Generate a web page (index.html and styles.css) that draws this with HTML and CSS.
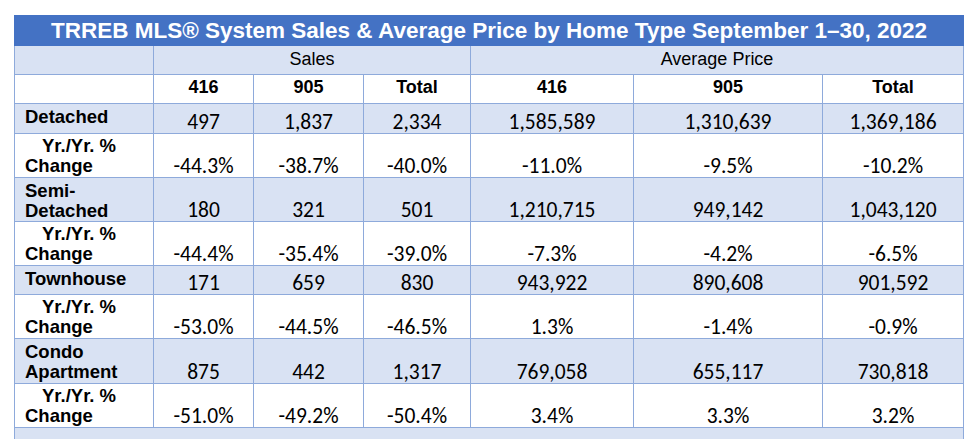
FILE: index.html
```html
<!DOCTYPE html>
<html lang="en">
<head>
<meta charset="utf-8">
<title>TRREB MLS® System Sales &amp; Average Price by Home Type</title>
<link rel="stylesheet" href="styles.css">
</head>
<body>
<table class="sales-table">
  <colgroup>
    <col class="c-label">
    <col class="c-s416">
    <col class="c-s905">
    <col class="c-stot">
    <col class="c-p416">
    <col class="c-p905">
    <col class="c-ptot">
  </colgroup>
  <tr class="title-row">
    <th colspan="7" class="title">TRREB MLS® System Sales &amp; Average Price by Home Type September 1–30, 2022</th>
  </tr>
  <tr class="group-row shaded">
    <th class="blank"></th>
    <th colspan="3" class="group">Sales</th>
    <th colspan="3" class="group">Average Price</th>
  </tr>
  <tr class="head-row">
    <th class="blank"></th>
    <th class="col-head">416</th>
    <th class="col-head">905</th>
    <th class="col-head">Total</th>
    <th class="col-head">416</th>
    <th class="col-head">905</th>
    <th class="col-head">Total</th>
  </tr>
  <tr class="type-row shaded">
    <th class="label">Detached</th>
    <td>497</td><td>1,837</td><td>2,334</td><td>1,585,589</td><td>1,310,639</td><td>1,369,186</td>
  </tr>
  <tr class="change-row">
    <th class="label change">Yr./Yr. %<br>Change</th>
    <td>-44.3%</td><td>-38.7%</td><td>-40.0%</td><td>-11.0%</td><td>-9.5%</td><td>-10.2%</td>
  </tr>
  <tr class="type-row two-line shaded">
    <th class="label">Semi-<br>Detached</th>
    <td>180</td><td>321</td><td>501</td><td>1,210,715</td><td>949,142</td><td>1,043,120</td>
  </tr>
  <tr class="change-row">
    <th class="label change">Yr./Yr. %<br>Change</th>
    <td>-44.4%</td><td>-35.4%</td><td>-39.0%</td><td>-7.3%</td><td>-4.2%</td><td>-6.5%</td>
  </tr>
  <tr class="type-row short shaded">
    <th class="label">Townhouse</th>
    <td>171</td><td>659</td><td>830</td><td>943,922</td><td>890,608</td><td>901,592</td>
  </tr>
  <tr class="change-row">
    <th class="label change">Yr./Yr. %<br>Change</th>
    <td>-53.0%</td><td>-44.5%</td><td>-46.5%</td><td>1.3%</td><td>-1.4%</td><td>-0.9%</td>
  </tr>
  <tr class="type-row two-line tall shaded">
    <th class="label">Condo<br>Apartment</th>
    <td>875</td><td>442</td><td>1,317</td><td>769,058</td><td>655,117</td><td>730,818</td>
  </tr>
  <tr class="change-row">
    <th class="label change">Yr./Yr. %<br>Change</th>
    <td>-51.0%</td><td>-49.2%</td><td>-50.4%</td><td>3.4%</td><td>3.3%</td><td>3.2%</td>
  </tr>
  <tr class="foot-row shaded">
    <td colspan="7"></td>
  </tr>
</table>
</body>
</html>
```

FILE: styles.css
```css
html, body {
  margin: 0;
  background: #ffffff;
}

body {
  padding: 15px 0 0 14px;
}

.sales-table {
  border-collapse: collapse;
  table-layout: fixed;
  width: 949px;
  font-family: "Liberation Sans", Arial, sans-serif;
  color: #000;
}

.c-label { width: 139px; }
.c-s416 { width: 100px; }
.c-s905 { width: 110px; }
.c-stot { width: 107px; }
.c-p416 { width: 163px; }
.c-p905 { width: 189px; }
.c-ptot { width: 141px; }

.sales-table th,
.sales-table td {
  border: 1px solid #8eaadb;
  padding: 0;
}

.sales-table .shaded th,
.sales-table .shaded td {
  background: #d9e2f3;
}

.title-row { height: 30px; }

.sales-table .title {
  background: #4472c4;
  border-color: #4472c4;
  color: #ffffff;
  font-size: 22.5px;
  font-weight: bold;
  text-align: center;
  vertical-align: middle;
  line-height: 26px;
  white-space: nowrap;
  padding-top: 1px;
}

.group-row { height: 29px; }

.sales-table .group {
  font-weight: normal;
  font-size: 18px;
  line-height: 20px;
  text-align: center;
  vertical-align: top;
  padding-top: 3px;
}

.head-row { height: 29px; }

.sales-table .col-head {
  font-weight: bold;
  font-size: 18px;
  line-height: 20px;
  text-align: center;
  vertical-align: top;
  padding-top: 2px;
}

.type-row { height: 30px; }
.type-row.short { height: 29px; }
.type-row.two-line { height: 44px; }
.type-row.tall { height: 45px; }
.change-row { height: 44px; }
.foot-row { height: 30px; }

.sales-table .label {
  font-weight: bold;
  font-size: 18.5px;
  line-height: 20px;
  text-align: left;
  vertical-align: top;
  padding: 3px 0 0 10px;
  white-space: nowrap;
}

.sales-table .label.change {
  text-indent: 17px;
  padding-top: 2px;
}

.sales-table td {
  font-family: Carlito, Calibri, "Open Sans", sans-serif;
  font-size: 21.5px;
  line-height: 22px;
  text-align: center;
  vertical-align: bottom;
  padding-bottom: 0;
}
```
